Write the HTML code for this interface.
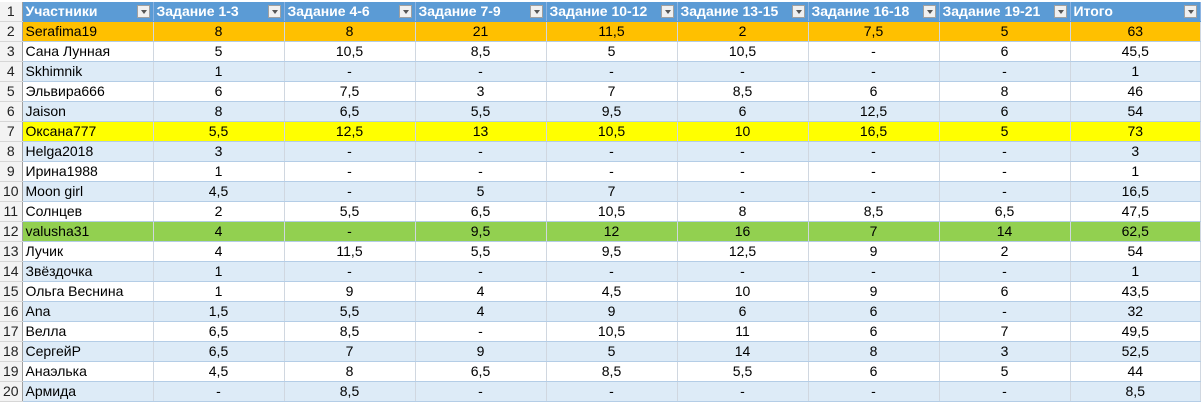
<!DOCTYPE html>
<html><head><meta charset="utf-8"><style>
body{margin:0;width:1201px;height:402px;overflow:hidden;background:#fff;font-family:"Liberation Sans",Arial,sans-serif;font-size:14px;color:#000}
table{border-collapse:collapse;table-layout:fixed;width:1201px;margin-top:2px}
td{height:19px;padding:0;border-bottom:1px solid #b4cde6;border-right:1px solid #d0d7e0;text-align:center;white-space:nowrap;overflow:hidden;line-height:19px}
td:first-child{color:#222;text-align:center;border-right:1px solid #9e9e9e;border-bottom:1px solid #d6d6d6;font-size:14px}
td:nth-child(2){text-align:left;padding-left:3px}
tr:nth-child(even) td{background:#ddebf7}
tr:nth-child(odd) td{background:#fff}
tr.h td{background:#5b9bd5 !important;color:#fff;font-weight:bold;text-align:left;padding-left:3px;position:relative;border-right:1px solid #8db4e2;border-bottom:1px solid #5b9bd5}
tr.h td:first-child{color:#222;font-weight:normal;text-align:center;padding-left:0;border-right:1px solid #9e9e9e;border-bottom:1px solid #d6d6d6}
.dd{position:absolute;right:3px;top:3px;width:13px;height:13px;background:#f0f0f0;border:1px solid #a0a0a0;box-sizing:border-box}
.dd:after{content:"";position:absolute;left:3px;top:4px;border-left:3px solid transparent;border-right:3px solid transparent;border-top:4px solid #555}
tr.o td{background:#ffc000 !important}
tr.y td{background:#ffff00 !important}
tr.g td{background:#92d050 !important}
tr td:first-child{background:#f3f3f3 !important}
</style></head><body>
<table>
<colgroup><col style="width:22px"><col style="width:131px"><col style="width:131px"><col style="width:131px"><col style="width:131px"><col style="width:131px"><col style="width:131px"><col style="width:131px"><col style="width:131px"></colgroup>
<tr class="h"><td>1</td><td>Участники<span class="dd"></span></td><td>Задание 1-3<span class="dd"></span></td><td>Задание 4-6<span class="dd"></span></td><td>Задание 7-9<span class="dd"></span></td><td>Задание 10-12<span class="dd"></span></td><td>Задание 13-15<span class="dd"></span></td><td>Задание 16-18<span class="dd"></span></td><td>Задание 19-21<span class="dd"></span></td><td>Итого<span class="dd"></span></td></tr>
<tr class="o"><td>2</td><td>Serafima19</td><td>8</td><td>8</td><td>21</td><td>11,5</td><td>2</td><td>7,5</td><td>5</td><td>63</td></tr>
<tr><td>3</td><td>Сана Лунная</td><td>5</td><td>10,5</td><td>8,5</td><td>5</td><td>10,5</td><td>-</td><td>6</td><td>45,5</td></tr>
<tr><td>4</td><td>Skhimnik</td><td>1</td><td>-</td><td>-</td><td>-</td><td>-</td><td>-</td><td>-</td><td>1</td></tr>
<tr><td>5</td><td>Эльвира666</td><td>6</td><td>7,5</td><td>3</td><td>7</td><td>8,5</td><td>6</td><td>8</td><td>46</td></tr>
<tr><td>6</td><td>Jaison</td><td>8</td><td>6,5</td><td>5,5</td><td>9,5</td><td>6</td><td>12,5</td><td>6</td><td>54</td></tr>
<tr class="y"><td>7</td><td>Оксана777</td><td>5,5</td><td>12,5</td><td>13</td><td>10,5</td><td>10</td><td>16,5</td><td>5</td><td>73</td></tr>
<tr><td>8</td><td>Helga2018</td><td>3</td><td>-</td><td>-</td><td>-</td><td>-</td><td>-</td><td>-</td><td>3</td></tr>
<tr><td>9</td><td>Ирина1988</td><td>1</td><td>-</td><td>-</td><td>-</td><td>-</td><td>-</td><td>-</td><td>1</td></tr>
<tr><td>10</td><td>Moon girl</td><td>4,5</td><td>-</td><td>5</td><td>7</td><td>-</td><td>-</td><td>-</td><td>16,5</td></tr>
<tr><td>11</td><td>Солнцев</td><td>2</td><td>5,5</td><td>6,5</td><td>10,5</td><td>8</td><td>8,5</td><td>6,5</td><td>47,5</td></tr>
<tr class="g"><td>12</td><td>valusha31</td><td>4</td><td>-</td><td>9,5</td><td>12</td><td>16</td><td>7</td><td>14</td><td>62,5</td></tr>
<tr><td>13</td><td>Лучик</td><td>4</td><td>11,5</td><td>5,5</td><td>9,5</td><td>12,5</td><td>9</td><td>2</td><td>54</td></tr>
<tr><td>14</td><td>Звёздочка</td><td>1</td><td>-</td><td>-</td><td>-</td><td>-</td><td>-</td><td>-</td><td>1</td></tr>
<tr><td>15</td><td>Ольга Веснина</td><td>1</td><td>9</td><td>4</td><td>4,5</td><td>10</td><td>9</td><td>6</td><td>43,5</td></tr>
<tr><td>16</td><td>Ana</td><td>1,5</td><td>5,5</td><td>4</td><td>9</td><td>6</td><td>6</td><td>-</td><td>32</td></tr>
<tr><td>17</td><td>Велла</td><td>6,5</td><td>8,5</td><td>-</td><td>10,5</td><td>11</td><td>6</td><td>7</td><td>49,5</td></tr>
<tr><td>18</td><td>СергейР</td><td>6,5</td><td>7</td><td>9</td><td>5</td><td>14</td><td>8</td><td>3</td><td>52,5</td></tr>
<tr><td>19</td><td>Анаэлька</td><td>4,5</td><td>8</td><td>6,5</td><td>8,5</td><td>5,5</td><td>6</td><td>5</td><td>44</td></tr>
<tr><td>20</td><td>Армида</td><td>-</td><td>8,5</td><td>-</td><td>-</td><td>-</td><td>-</td><td>-</td><td>8,5</td></tr>
</table>
</body></html>
